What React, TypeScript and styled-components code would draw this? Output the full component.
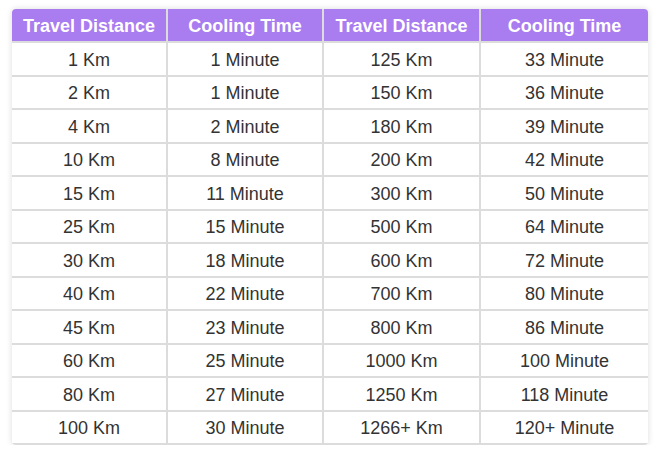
import React from 'react';
import styled, { createGlobalStyle } from 'styled-components';

const GlobalStyle = createGlobalStyle`
    body {
        margin: 0;
        background: #ffffff;
        font-family: "Liberation Sans", Arial, sans-serif;
    }
`;

const Page = styled.div`
    padding: 9px 13px 0 12px;
`;

const Card = styled.div`
    width: 636px;
    border-radius: 4px;
    overflow: hidden;
    box-shadow: 0 0 6px rgba(0, 0, 0, 0.14);
`;

const Table = styled.table`
    width: 100%;
    border-collapse: collapse;
    table-layout: fixed;
`;

const HeadCell = styled.th`
    height: 31px;
    padding: 1px 0 0;
    line-height: 20px;
    background: #a97cf0;
    color: #ffffff;
    font-size: 18px;
    font-weight: bold;
    text-align: center;
    border-left: 2px solid #dcdcdc;
    border-bottom: 2px solid #dcdcdc;
    &:first-child {
        border-left: none;
    }
`;

const Cell = styled.td`
    height: 29.5px;
    padding: 2px 0 0;
    line-height: 20px;
    color: #333333;
    font-size: 18px;
    text-align: center;
    border-left: 2px solid #dcdcdc;
    border-bottom: 2px solid #dcdcdc;
    &:first-child {
        border-left: none;
    }
`;

const columns = [
    { label: 'Travel Distance', width: 155 },
    { label: 'Cooling Time', width: 156 },
    { label: 'Travel Distance', width: 157 },
    { label: 'Cooling Time', width: 168 },
];

const rows = [
    ['1 Km', '1 Minute', '125 Km', '33 Minute'],
    ['2 Km', '1 Minute', '150 Km', '36 Minute'],
    ['4 Km', '2 Minute', '180 Km', '39 Minute'],
    ['10 Km', '8 Minute', '200 Km', '42 Minute'],
    ['15 Km', '11 Minute', '300 Km', '50 Minute'],
    ['25 Km', '15 Minute', '500 Km', '64 Minute'],
    ['30 Km', '18 Minute', '600 Km', '72 Minute'],
    ['40 Km', '22 Minute', '700 Km', '80 Minute'],
    ['45 Km', '23 Minute', '800 Km', '86 Minute'],
    ['60 Km', '25 Minute', '1000 Km', '100 Minute'],
    ['80 Km', '27 Minute', '1250 Km', '118 Minute'],
    ['100 Km', '30 Minute', '1266+ Km', '120+ Minute'],
];

export default function App() {
    return (
        <>
            <GlobalStyle />
            <Page>
                <Card>
                    <Table>
                        <colgroup>
                            {columns.map((c, i) => (
                                <col key={i} style={{ width: c.width }} />
                            ))}
                        </colgroup>
                        <thead>
                            <tr>
                                {columns.map((c, i) => (
                                    <HeadCell key={i}>{c.label}</HeadCell>
                                ))}
                            </tr>
                        </thead>
                        <tbody>
                            {rows.map((row, r) => (
                                <tr key={r}>
                                    {row.map((v, i) => (
                                        <Cell key={i}>{v}</Cell>
                                    ))}
                                </tr>
                            ))}
                        </tbody>
                    </Table>
                </Card>
            </Page>
        </>
    );
}
